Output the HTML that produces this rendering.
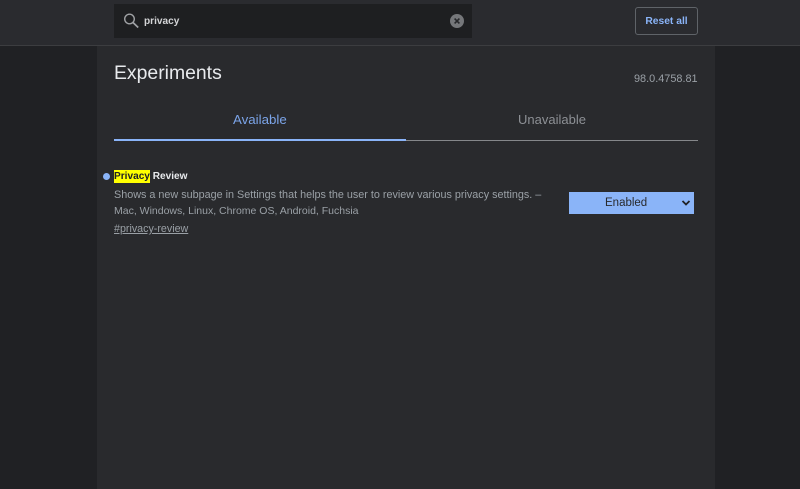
<!DOCTYPE html>
<html><head><meta charset="utf-8">
<style>
html,body{margin:0;padding:0;width:800px;height:489px;overflow:hidden;background:#202124;font-family:"Liberation Sans",sans-serif}
.a{position:absolute;white-space:nowrap}
</style></head>
<body>
<div class="a" style="left:0;top:0;width:800px;height:45px;background:#2a2b2f;border-bottom:1px solid #3c3d40"></div>
<div class="a" style="left:97px;top:46px;width:618px;height:443px;background:#292a2d"></div>
<div class="a" style="left:114px;top:4px;width:358px;height:34px;background:#1e1f21"></div>
<svg class="a" style="left:122px;top:12px" width="18" height="18" viewBox="0 0 18 18"><circle cx="7.5" cy="7" r="4.8" fill="none" stroke="#a0a2a5" stroke-width="1.4"/><path d="M11 10.5L16.2 15.5" stroke="#a0a2a5" stroke-width="1.7"/></svg>
<div class="a" style="left:144px;top:15px;font-size:10.1px;line-height:14px;font-weight:bold;color:#d4d5d7">privacy</div>
<svg class="a" style="left:450px;top:14px" width="14" height="14" viewBox="0 0 14 14"><circle cx="7" cy="7" r="7" fill="#75777a"/><path d="M4.6 4.6L9.4 9.4M9.4 4.6L4.6 9.4" stroke="#26272a" stroke-width="1.6"/></svg>
<div class="a" style="left:635px;top:7px;width:61px;height:26px;border:1px solid #5f6368;border-radius:3px;text-align:center;font-size:10.3px;line-height:27px;font-weight:bold;color:#8ab4f8">Reset all</div>
<div class="a" style="left:114px;top:61px;font-size:19.4px;line-height:24px;color:#e8eaed">Experiments</div>
<div class="a" style="left:634px;top:72px;font-size:10.9px;line-height:14px;color:#9aa0a6">98.0.4758.81</div>
<div class="a" style="left:233px;top:112px;font-size:13.3px;line-height:16px;color:#7ba4e8">Available</div>
<div class="a" style="left:518px;top:112px;font-size:13px;line-height:16px;color:#8d9095">Unavailable</div>
<div class="a" style="left:114px;top:140px;width:584px;height:1px;background:#85878a"></div>
<div class="a" style="left:114px;top:139px;width:292px;height:2px;background:#8ab4f8"></div>
<div class="a" style="left:103px;top:173px;width:7px;height:7px;border-radius:50%;background:#8ab4f8"></div>
<div class="a" style="left:114px;top:170px;font-size:10.1px;line-height:14px;font-weight:bold;color:#e8eaed"><span style="display:inline-block;line-height:13px;background:#ffff00;color:#202124">Privacy</span> Review</div>
<div class="a" style="left:114px;top:187px;font-size:10.8px;line-height:16px;color:#9aa0a6">Shows a new subpage in Settings that helps the user to review various privacy settings. –</div>
<div class="a" style="left:114px;top:203px;font-size:10.5px;line-height:16px;color:#9aa0a6">Mac, Windows, Linux, Chrome OS, Android, Fuchsia</div>
<div class="a" style="left:114px;top:222px;font-size:10.7px;line-height:14px;color:#9aa0a6;text-decoration:underline">#privacy-review</div>
<div class="a" style="left:569px;top:192px;width:125px;height:22px;background:#8ab4f8"></div>
<div class="a" style="left:605px;top:195px;font-size:11.5px;line-height:16px;color:#292a2d">Enabled</div>
<svg class="a" style="left:681px;top:199px" width="10" height="8" viewBox="0 0 10 8"><path d="M1.5 2L5 5.5L8.5 2" fill="none" stroke="#202124" stroke-width="1.8"/></svg>
</body></html>
